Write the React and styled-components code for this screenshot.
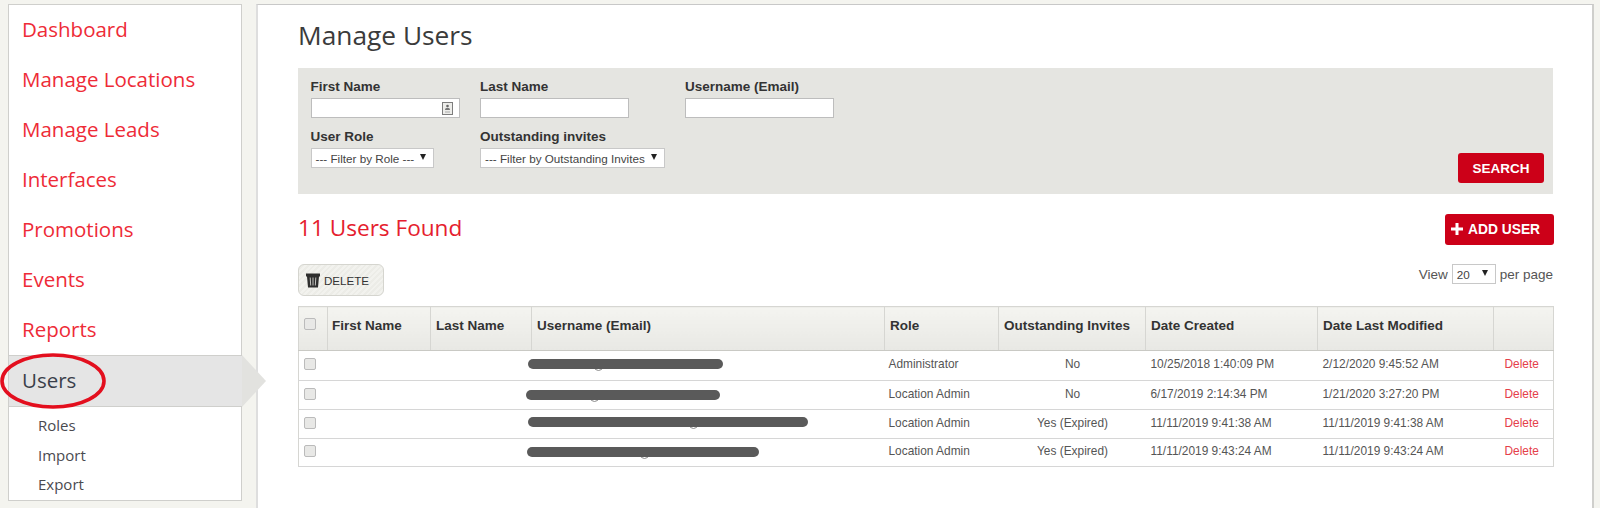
import React from 'react';
import styled, { createGlobalStyle } from 'styled-components';

const GlobalStyle = createGlobalStyle`
  html, body {
    margin: 0;
    padding: 0;
    background: #f4f4ef;
    height: 508px;
    overflow: hidden;
  }
  * { box-sizing: border-box; }
`;

const Page = styled.div`
  display: flex;
  align-items: flex-start;
  gap: 14px;
  width: 1600px;
  height: 508px;
  padding: 4px 6px 0 8px;
  background: #f4f4ef;
  font-family: "Liberation Sans", Arial, sans-serif;
`;

const Sidebar = styled.aside`
  width: 234px;
  height: 497px;
  flex-shrink: 0;
  background: #fff;
  border: 1px solid #cfcfcc;
`;

const NavItem = styled.a`
  position: relative;
  display: flex;
  align-items: center;
  height: 50px;
  padding: 0 0 2px 13px;
  font-family: "Open Sans", sans-serif;
  font-size: 20.5px;
  color: ${p => (p.$active ? '#3a3f4a' : '#ee2b37')};
  ${p => p.$active && `
    height: 52px;
    margin-right: -1px;
    margin-bottom: 4px;
    background: #e5e5e5;
    border-top: 1px solid #cfcfcc;
    border-bottom: 1px solid #cfcfcc;
    &::after {
      content: '';
      position: absolute;
      top: -1px;
      left: 100%;
      border-top: 26px solid transparent;
      border-bottom: 26px solid transparent;
      border-left: 24px solid #e2e2df;
    }
  `}
`;

const SubItem = styled.a`
  display: flex;
  align-items: center;
  height: 29.5px;
  padding: 0 0 1px 29px;
  font-family: "Open Sans", sans-serif;
  font-size: 15px;
  color: #4a4a50;
`;

const Highlight = styled.svg`
  position: absolute;
  left: -10px;
  top: -4px;
  width: 110px;
  height: 58px;
  pointer-events: none;
`;

const Main = styled.main`
  width: 1338px;
  height: 504px;
  padding: 0 39px 0 40px;
  background: #fff;
  border-top: 1px solid #c8c8c8;
  border-left: 2px solid #dedede;
  border-right: 2px solid #cfcfcc;
`;

const Title = styled.h1`
  margin: 0;
  height: 63px;
  padding-top: 13px;
  font-family: "Open Sans", sans-serif;
  font-size: 26.3px;
  line-height: 34px;
  font-weight: 400;
  color: #3b3b3b;
`;

const FilterPanel = styled.form`
  position: relative;
  height: 126px;
  padding: 11px 13px 0 12.5px;
  background: #e5e5e1;
`;

const FilterRow = styled.div`
  display: flex;
  height: 50px;
`;

const Field = styled.label`
  display: flex;
  flex-direction: column;
  width: ${p => p.$width}px;
`;

const FieldLabel = styled.span`
  height: 19px;
  font-size: 13.5px;
  line-height: 16px;
  font-weight: 700;
  color: #333;
`;

const InputBox = styled.span`
  display: flex;
  align-items: center;
  justify-content: flex-end;
  width: 149px;
  height: 20px;
  padding-right: 6px;
  background: #fff;
  border: 1px solid #bdbdbd;
`;

const SelectBox = styled.span`
  display: flex;
  align-items: center;
  justify-content: space-between;
  width: ${p => p.$width}px;
  height: 20px;
  padding: 0 7px 0 4px;
  background: #fff;
  border: 1px solid #c8c8c8;
  font-size: 11.7px;
  color: #444;
  white-space: nowrap;
`;

const Caret = styled.i`
  width: 0;
  height: 0;
  margin-bottom: 2px;
  border-left: 3.5px solid transparent;
  border-right: 3.5px solid transparent;
  border-top: 6px solid #222;
`;

const SearchButton = styled.button`
  position: absolute;
  right: 9px;
  bottom: 11px;
  width: 86px;
  height: 30px;
  border: 0;
  border-radius: 3px;
  background: #cc0018;
  color: #fff;
  font-family: inherit;
  font-size: 13.5px;
  font-weight: 700;
`;

const ResultsBar = styled.div`
  display: flex;
  align-items: center;
  justify-content: space-between;
  height: 70px;
`;

const ResultsTitle = styled.h2`
  margin: 0 0 4px;
  font-family: "Open Sans", sans-serif;
  font-size: 22.6px;
  font-weight: 400;
  color: #e5202e;
`;

const AddButton = styled.button`
  display: flex;
  align-items: center;
  gap: 4px;
  width: 109px;
  height: 31px;
  margin-right: -1px;
  padding: 0 0 0 5px;
  border: 0;
  border-radius: 3px;
  background: #cc0018;
  color: #fff;
  font-family: inherit;
  font-size: 13.8px;
  font-weight: 700;
  white-space: nowrap;
`;

const ToolsBar = styled.div`
  display: flex;
  align-items: flex-start;
  justify-content: space-between;
  height: 42px;
`;

const DeleteButton = styled.button`
  display: flex;
  align-items: center;
  gap: 4px;
  width: 86px;
  height: 32px;
  padding: 0 0 0 7px;
  border: 1px solid #d5d5cf;
  border-radius: 6px;
  background: repeating-linear-gradient(135deg, #f2f2ee, #f2f2ee 2px, #ecece7 2px, #ecece7 4px);
  color: #333;
  font-family: inherit;
  font-size: 11.6px;
`;

const PerPage = styled.div`
  display: flex;
  align-items: center;
  gap: 4px;
  font-size: 13.5px;
  color: #555;
`;

const Table = styled.table`
  width: 1255px;
  border-collapse: collapse;
  table-layout: fixed;
  font-size: 11.9px;
  color: #555;
  border: 1px solid #d6d6d2;
`;

const HeadCell = styled.th`
  height: 44px;
  padding: 0 4px 6px ${p => p.$inset || 5}px;
  text-align: left;
  background: linear-gradient(#f4f4f0, #e8e8e4);
  border: 1px solid #d6d6d2;
  border-bottom: 1px solid #c9c9c4;
  font-size: 13.5px;
  font-weight: 700;
  color: #333;
  white-space: nowrap;
`;

const Row = styled.tr`
  height: ${p => p.$height}px;
`;

const Cell = styled.td`
  position: relative;
  padding: 0 0 3px ${p => p.$inset || 5}px;
  text-align: ${p => p.$align || 'left'};
  border-bottom: 1px solid #d6d6d6;
  white-space: nowrap;
`;

const CheckBox = styled.span`
  display: block;
  width: 12px;
  height: 12px;
  margin-top: ${p => (p.$raised ? -4 : 0)}px;
  background: #e8e8e6;
  border: 1px solid #bbb;
  border-radius: 2px;
`;

const Redacted = styled.span`
  position: absolute;
  top: ${p => p.$top}px;
  left: ${p => p.$left}px;
  width: ${p => p.$width}px;
  height: 10px;
  border-radius: 5px;
  background: #5a5a5a;
`;

// the bottom of the @ sign that still shows under the blacked out address
const AtRemnant = styled.span`
  position: absolute;
  top: ${p => p.$top + 3}px;
  left: ${p => p.$left}px;
  width: 9px;
  height: 9px;
  border: 1px solid #8a8a8a;
  border-radius: 50%;
`;

const DeleteLink = styled.a`
  color: #e5404a;
`;

const TrashIcon = () => (
  <svg width="14" height="15" viewBox="0 0 14 15">
    <path d="M0 0.5h14v3h-1l-1 11H2L1 3.500H0z" fill="#2e2e2e" />
    <path d="M4.200 4.500l.5 8M7 4.500v8M9.800 4.500l-.5 8" stroke="#c4c4c0" strokeWidth="1" />
  </svg>
);

const ContactIcon = () => (
  <svg width="11" height="13" viewBox="0 0 11 13">
    <rect x="0.500" y="0.500" width="10" height="12" fill="#ededea" stroke="#7d7d7d" />
    <circle cx="5.500" cy="4" r="1.300" fill="#666" />
    <path d="M3 8c0-1.500 1-2.300 2.500-2.300S8 6.500 8 8z" fill="#777" />
    <path d="M3 10h5" stroke="#aaa" />
  </svg>
);

const navLinks = ['Dashboard', 'Manage Locations', 'Manage Leads', 'Interfaces', 'Promotions', 'Events', 'Reports'];

const users = [
  { role: 'Administrator', invites: 'No', created: '10/25/2018 1:40:09 PM', modified: '2/12/2020 9:45:52 AM', left: -4, top: 8, width: 195, at: 62, height: 30 },
  { role: 'Location Admin', invites: 'No', created: '6/17/2019 2:14:34 PM', modified: '1/21/2020 3:27:20 PM', left: -6, top: 9, width: 194, at: 58, height: 29 },
  { role: 'Location Admin', invites: 'Yes (Expired)', created: '11/11/2019 9:41:38 AM', modified: '11/11/2019 9:41:38 AM', left: -4, top: 7, width: 280, at: 157, height: 29 },
  { role: 'Location Admin', invites: 'Yes (Expired)', created: '11/11/2019 9:43:24 AM', modified: '11/11/2019 9:43:24 AM', left: -5, top: 8, width: 232, at: 108, height: 28 },
];

const App = () => (
  <Page>
    <GlobalStyle />
    <Sidebar>
      {navLinks.map(link => <NavItem key={link}>{link}</NavItem>)}
      <NavItem $active>
        Users
        <Highlight viewBox="0 0 110 58">
          <ellipse cx="54" cy="29" rx="51" ry="26" fill="none" stroke="#e30f1e" strokeWidth="3.600" />
        </Highlight>
      </NavItem>
      <SubItem>Roles</SubItem>
      <SubItem>Import</SubItem>
      <SubItem>Export</SubItem>
    </Sidebar>
    <Main>
      <Title>Manage Users</Title>
      <FilterPanel>
        <FilterRow>
          <Field $width={169.5}>
            <FieldLabel>First Name</FieldLabel>
            <InputBox><ContactIcon /></InputBox>
          </Field>
          <Field $width={205}>
            <FieldLabel>Last Name</FieldLabel>
            <InputBox />
          </Field>
          <Field $width={200}>
            <FieldLabel>Username (Email)</FieldLabel>
            <InputBox />
          </Field>
        </FilterRow>
        <FilterRow>
          <Field $width={169.5}>
            <FieldLabel>User Role</FieldLabel>
            <SelectBox $width={123}>--- Filter by Role --- <Caret /></SelectBox>
          </Field>
          <Field $width={205}>
            <FieldLabel>Outstanding invites</FieldLabel>
            <SelectBox $width={185}>--- Filter by Outstanding Invites <Caret /></SelectBox>
          </Field>
        </FilterRow>
        <SearchButton type="button">SEARCH</SearchButton>
      </FilterPanel>
      <ResultsBar>
        <ResultsTitle>11 Users Found</ResultsTitle>
        <AddButton type="button">
          <svg width="14" height="14" viewBox="0 0 14 14"><path d="M5.500 1h3v4.500H13v3H8.500V13h-3V8.500H1v-3h4.500z" fill="#fff" /></svg>
          ADD USER
        </AddButton>
      </ResultsBar>
      <ToolsBar>
        <DeleteButton type="button"><TrashIcon />DELETE</DeleteButton>
        <PerPage>
          View
          <SelectBox $width={44}>20 <Caret /></SelectBox>
          per page
        </PerPage>
      </ToolsBar>
      <Table>
        <colgroup>
          <col style={{ width: 29 }} /><col style={{ width: 103 }} /><col style={{ width: 101 }} />
          <col style={{ width: 353 }} /><col style={{ width: 114 }} /><col style={{ width: 147 }} />
          <col style={{ width: 172 }} /><col style={{ width: 176 }} /><col style={{ width: 60 }} />
        </colgroup>
        <thead>
          <tr>
            <HeadCell><CheckBox $raised /></HeadCell>
            <HeadCell $inset={4}>First Name</HeadCell>
            <HeadCell>Last Name</HeadCell>
            <HeadCell>Username (Email)</HeadCell>
            <HeadCell>Role</HeadCell>
            <HeadCell>Outstanding Invites</HeadCell>
            <HeadCell>Date Created</HeadCell>
            <HeadCell>Date Last Modified</HeadCell>
            <HeadCell />
          </tr>
        </thead>
        <tbody>
          {users.map(user => (
            <Row key={user.created} $height={user.height}>
              <Cell><CheckBox /></Cell>
              <Cell />
              <Cell />
              <Cell>
                <AtRemnant $left={user.at} $top={user.top} />
                <Redacted $left={user.left} $top={user.top} $width={user.width} />
              </Cell>
              <Cell $inset={4}>{user.role}</Cell>
              <Cell $inset={1} $align="center">{user.invites}</Cell>
              <Cell>{user.created}</Cell>
              <Cell>{user.modified}</Cell>
              <Cell $inset={11}><DeleteLink>Delete</DeleteLink></Cell>
            </Row>
          ))}
        </tbody>
      </Table>
    </Main>
  </Page>
);

export default App;
